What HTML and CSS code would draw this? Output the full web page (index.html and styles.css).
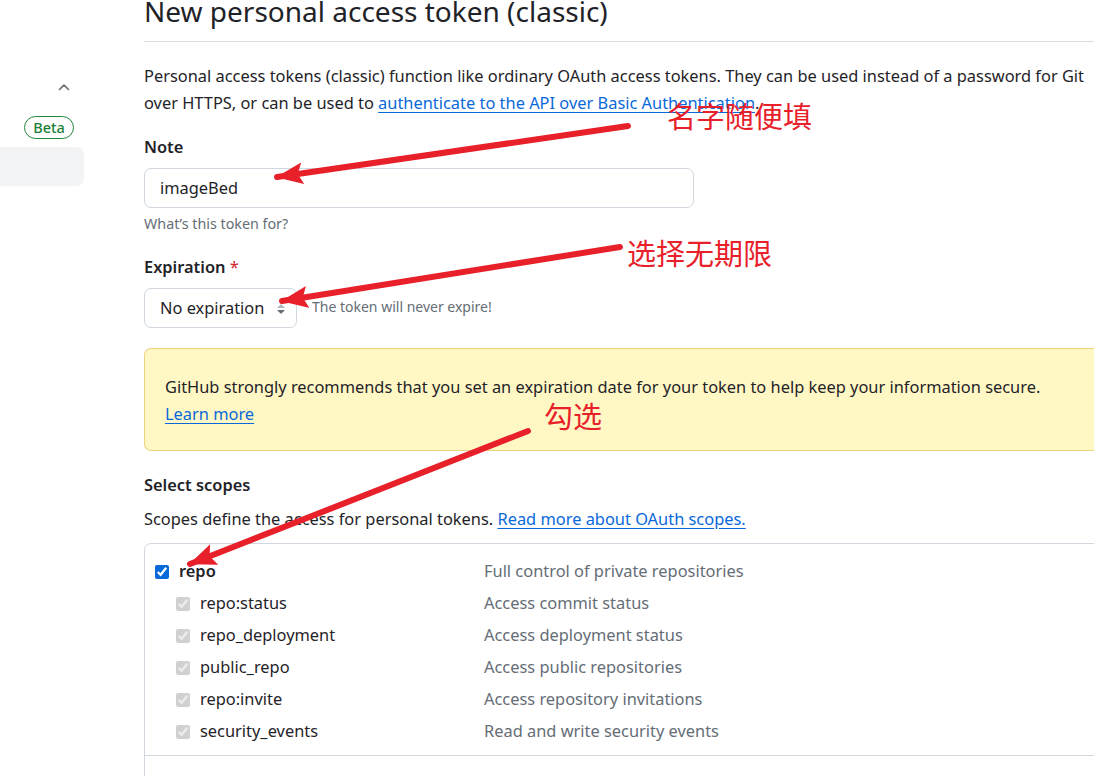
FILE: index.html
```html
<!DOCTYPE html>
<html lang="en">
<head>
<meta charset="utf-8">
<title>New personal access token (classic)</title>
<link rel="stylesheet" href="styles.css">
</head>
<body>
<div class="page">
  <aside class="sidebar">
    <div class="chev-row">
      <svg class="chev" viewBox="0 0 16 16" width="16" height="16"><path d="M3.5 10.5 8 6l4.5 4.5" fill="none" stroke="#656d76" stroke-width="1.6" stroke-linecap="round" stroke-linejoin="round"/></svg>
    </div>
    <div class="badge-row"><span class="badge">Beta</span></div>
    <div class="nav-active"></div>
  </aside>

  <main class="main">
    <div class="subhead"><h1 class="title">New personal access token (classic)</h1></div>

    <p class="intro">Personal access tokens (classic) function like ordinary OAuth access tokens. They can be used instead of a password for Git<br>over HTTPS, or can be used to <a href="#" class="link">authenticate to the API over Basic Authentication</a>.</p>

    <div class="field">
      <div class="label">Note</div>
      <div class="input">imageBed</div>
      <p class="hint">What’s this token for?</p>
    </div>

    <div class="field field-exp">
      <div class="label">Expiration <span class="req">*</span></div>
      <div class="select-row">
        <div class="select">
          <span>No expiration</span>
          <svg class="caret" viewBox="0 0 16 16" width="16" height="16"><path d="M4.43 9.43l3.4 3.4a.25.25 0 0 0 .35 0l3.4-3.4A.25.25 0 0 0 11.4 9H4.6a.25.25 0 0 0-.17.43z" fill="#656d76"/><path d="M4.43 6.57l3.4-3.4a.25.25 0 0 1 .35 0l3.4 3.4A.25.25 0 0 1 11.4 7H4.6a.25.25 0 0 1-.17-.43z" fill="#afb8c1"/></svg>
        </div>
        <span class="hint hint-inline">The token will never expire!</span>
      </div>
    </div>

    <div class="flash">GitHub strongly recommends that you set an expiration date for your token to help keep your information secure.<br><a href="#" class="link">Learn more</a></div>

    <h3 class="section-title">Select scopes</h3>
    <p class="scopes-intro">Scopes define the access for personal tokens. <a href="#" class="link">Read more about OAuth scopes.</a></p>

    <div class="scopes">
      <div class="group">
        <div class="row">
          <label class="name name-main"><input type="checkbox" class="cb" checked><span>repo</span></label>
          <span class="desc">Full control of private repositories</span>
        </div>
        <div class="row">
          <label class="name name-sub"><input type="checkbox" class="cb cb-sub" checked disabled><span>repo:status</span></label>
          <span class="desc">Access commit status</span>
        </div>
        <div class="row">
          <label class="name name-sub"><input type="checkbox" class="cb cb-sub" checked disabled><span>repo_deployment</span></label>
          <span class="desc">Access deployment status</span>
        </div>
        <div class="row">
          <label class="name name-sub"><input type="checkbox" class="cb cb-sub" checked disabled><span>public_repo</span></label>
          <span class="desc">Access public repositories</span>
        </div>
        <div class="row">
          <label class="name name-sub"><input type="checkbox" class="cb cb-sub" checked disabled><span>repo:invite</span></label>
          <span class="desc">Access repository invitations</span>
        </div>
        <div class="row">
          <label class="name name-sub"><input type="checkbox" class="cb cb-sub" checked disabled><span>security_events</span></label>
          <span class="desc">Read and write security events</span>
        </div>
      </div>
      <div class="group">
        <div class="row">
          <label class="name name-main"><input type="checkbox" class="cb"><span>workflow</span></label>
          <span class="desc">Update GitHub Action workflows</span>
        </div>
      </div>
    </div>
  </main>
</div>

<svg class="annot" viewBox="0 0 1094 776" width="1094" height="776">
  <defs>
    <marker id="ah" markerUnits="userSpaceOnUse" markerWidth="30" markerHeight="24" refX="26" refY="11" orient="auto">
      <path d="M0 0 L27 11 L0 22 L5 11 Z" fill="#e8202a"/>
    </marker>
  </defs>
  <g stroke="#e8202a" stroke-width="6" stroke-linecap="round" fill="none">
    <line x1="628" y1="126" x2="277" y2="177" marker-end="url(#ah)"/>
    <line x1="620" y1="247" x2="282" y2="301" marker-end="url(#ah)"/>
    <line x1="528" y1="431" x2="190" y2="564" marker-end="url(#ah)"/>
  </g>
  <g class="annot-text" fill="#e8202a">
    <text x="667" y="128">名字随便填</text>
    <text x="627" y="265">选择无期限</text>
    <text x="544" y="428">勾选</text>
  </g>
</svg>
</body>
</html>
```

FILE: styles.css
```css
* { box-sizing: border-box; }

html, body {
  margin: 0;
  padding: 0;
  width: 1094px;
  height: 776px;
  overflow: hidden;
  background: #ffffff;
}

body {
  position: relative;
  font-family: "Noto Sans", "Open Sans", "Liberation Sans", sans-serif;
  font-size: 16.4px;
  line-height: 26.5px;
  color: #1f2328;
}

.page {
  display: flex;
  align-items: flex-start;
}

/* sidebar */
.sidebar {
  width: 84px;
  flex: 0 0 84px;
  display: flex;
  flex-direction: column;
}

.chev-row {
  margin-top: 79px;
  height: 16px;
  display: flex;
  justify-content: flex-end;
  padding-right: 12px;
}

.chev { display: block; }

.badge-row {
  margin-top: 21px;
  display: flex;
  justify-content: flex-end;
  padding-right: 10px;
}

.badge {
  display: inline-flex;
  align-items: center;
  justify-content: center;
  width: 50px;
  height: 23px;
  border: 1px solid #1f883d;
  border-radius: 12px;
  color: #1a7f37;
  font-size: 14.5px;
  font-weight: 500;
  line-height: 1;
}

.nav-active {
  margin-top: 8px;
  height: 39px;
  background: #f3f4f6;
  border-radius: 0 7px 7px 0;
}

/* main */
.main {
  margin-left: 60px;
  width: 980px;
  flex: 0 0 980px;
}

.subhead {
  margin-top: -7px;
  padding-bottom: 12px;
  border-bottom: 1px solid #d8dee4;
}

.title {
  margin: 0;
  font-size: 28px;
  line-height: 36px;
  font-weight: 400;
}

.intro {
  margin: 21px 0 0;
  white-space: nowrap;
}

.link {
  color: #0969da;
  text-decoration: underline;
  text-underline-offset: 3px;
}

.field { margin-top: 18px; }
.field-exp { margin-top: 20px; }

.label {
  font-weight: 600;
  line-height: 26px;
}

.req { color: #d1242f; font-weight: 400; }

.input {
  margin-top: 8px;
  width: 550px;
  height: 40px;
  border: 1px solid #d0d7de;
  border-radius: 7px;
  padding: 0 15px;
  display: flex;
  align-items: center;
}

.hint {
  margin: 6px 0 0;
  font-size: 14.3px;
  line-height: 20px;
  color: #656d76;
}

.select-row {
  margin-top: 8px;
  display: flex;
  align-items: center;
  gap: 15px;
}

.select {
  width: 153px;
  height: 40px;
  border: 1px solid #d0d7de;
  border-radius: 7px;
  padding: 0 7px 0 15px;
  display: flex;
  align-items: center;
  justify-content: space-between;
}

.caret { display: block; margin-top: 2px; }

.hint-inline { margin: 0 0 2px; font-size: 14px; }

.flash {
  margin-top: 20px;
  background: #fff8c5;
  border: 1px solid rgba(212, 167, 44, 0.45);
  border-radius: 7px;
  padding: 25px 20px 23px;
  white-space: nowrap;
}

.section-title {
  margin: 21px 0 0;
  font-size: 16.4px;
  font-weight: 600;
  line-height: 26px;
}

.scopes-intro {
  margin: 8px 0 0;
}

.scopes {
  margin-top: 10px;
  border: 1px solid #d0d7de;
  border-radius: 7px;
}

.group {
  padding: 12px 10px 7px;
}

.group + .group { border-top: 1px solid #d0d7de; }

.row {
  display: flex;
  align-items: center;
  height: 32px;
}

.name {
  width: 329px;
  flex: 0 0 329px;
  display: flex;
  align-items: center;
  color: #1f2328;
}

.name-main { font-weight: 600; }
.name-sub { padding-left: 21px; }

.cb {
  margin: 0 10px 0 0;
  width: 14px;
  height: 14px;
  accent-color: #0969da;
}

.cb-sub { margin-right: 10px; }

.desc { color: #656d76; }

/* annotation overlay */
.annot {
  position: absolute;
  left: 0;
  top: 0;
  pointer-events: none;
}

.annot-text text {
  font-family: "Noto Sans CJK SC", "Noto Sans CJK JP", sans-serif;
  font-size: 29px;
}
```
